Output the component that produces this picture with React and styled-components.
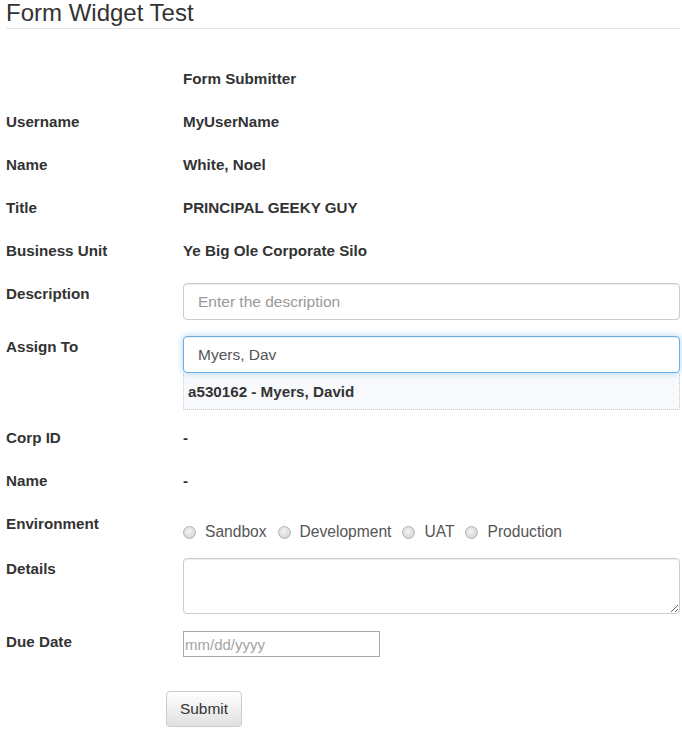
import React, { useState } from "react";
import styled, { createGlobalStyle } from "styled-components";

const GlobalStyle = createGlobalStyle`
  body {
    margin: 0;
    background: #fff;
    font-family: "Liberation Sans", Arial, sans-serif;
    color: #333;
  }
`;

const Page = styled.div`
  padding: 0 2px 0 6px;
`;

const Heading = styled.h3`
  margin: 0;
  font-size: 24px;
  font-weight: 400;
  line-height: 26px;
  padding-bottom: 2px;
  border-bottom: 1px solid #e5e5e5;
  color: #333;
`;

const Form = styled.form`
  display: flex;
  flex-direction: column;
  padding-top: 36px;
`;

const Row = styled.div`
  display: grid;
  grid-template-columns: 177px 1fr;
  margin-top: ${(p) => p.$top || 0}px;
`;

const Label = styled.label`
  font-size: 15.2px;
  font-weight: 700;
  line-height: 22px;
  padding-top: ${(p) => (p.$static ? 3 : 0)}px;
  color: #333;
`;

const Static = styled.div`
  font-size: 15.2px;
  font-weight: 700;
  line-height: 22px;
  padding: 3px 0;
  color: #333;
`;

const TextInput = styled.input`
  box-sizing: border-box;
  width: 100%;
  height: 37px;
  padding: 0 14px;
  font-family: inherit;
  font-size: 15.5px;
  color: #555;
  background: #fff;
  border: 1px solid ${(p) => (p.$focused ? "#66afe9" : "#ccc")};
  border-radius: 4px;
  outline: none;
  box-shadow: ${(p) =>
    p.$focused
      ? "inset 0 1px 1px rgba(0,0,0,.075), 0 0 7px rgba(102,175,233,.55)"
      : "inset 0 1px 1px rgba(0,0,0,.075)"};
  &::placeholder {
    color: #999;
  }
`;

const Suggest = styled.div`
  box-sizing: border-box;
  height: 37px;
  padding: 0 4px;
  display: flex;
  align-items: center;
  background: #f8f9fc;
  border: 1px dotted #c8c8c8;
  border-top: none;
  font-size: 15.2px;
  font-weight: 700;
  color: #333;
`;

const Radios = styled.div`
  display: flex;
  align-items: center;
  padding-top: 11px;
  height: 22px;
`;

const RadioLabel = styled.label`
  display: flex;
  align-items: center;
  font-size: 15.6px;
  color: #555;
  margin-right: 11px;
`;

const Radio = styled.input`
  appearance: none;
  width: 13px;
  height: 13px;
  margin: 0 9px 0 0;
  border-radius: 50%;
  border: 1px solid #b4b4b4;
  background: radial-gradient(circle at 45% 40%, #f4f4f4 0%, #dcdcdc 60%, #c9c9c9 100%);
  box-sizing: border-box;
`;

const TextArea = styled.textarea`
  box-sizing: border-box;
  width: 100%;
  height: 56px;
  padding: 6px 14px;
  font-family: inherit;
  font-size: 15.5px;
  color: #555;
  border: 1px solid #ccc;
  border-radius: 4px;
  box-shadow: inset 0 1px 1px rgba(0,0,0,.075);
  outline: none;
  display: block;
`;

const DateInput = styled.input`
  box-sizing: border-box;
  width: 197px;
  height: 26px;
  padding: 0 1px;
  font-family: inherit;
  font-size: 15px;
  color: #555;
  border: 1px solid #a9a9a9;
  border-radius: 0;
  outline: none;
  &::placeholder {
    color: #a3a3a3;
  }
`;

const SubmitButton = styled.button`
  margin: 34px 0 0 160px;
  width: 76px;
  height: 36px;
  font-family: inherit;
  font-size: 15.5px;
  color: #333;
  border: 1px solid #ccc;
  border-radius: 4px;
  background: linear-gradient(to bottom, #fff 0%, #e0e0e0 100%);
  box-shadow: inset 0 1px 0 rgba(255,255,255,.15), 0 1px 1px rgba(0,0,0,.075);
  cursor: pointer;
`;

const staticRows = [
  ["Username", "MyUserName"],
  ["Name", "White, Noel"],
  ["Title", "PRINCIPAL GEEKY GUY"],
  ["Business Unit", "Ye Big Ole Corporate Silo"],
];

const environments = ["Sandbox", "Development", "UAT", "Production"];

export default function App() {
  const [assignee, setAssignee] = useState("Myers, Dav");

  return (
    <Page>
      <GlobalStyle />
      <Heading>Form Widget Test</Heading>
      <Form onSubmit={(e) => e.preventDefault()}>
        <Row>
          <span />
          <Static>Form Submitter</Static>
        </Row>
        {staticRows.map(([label, value]) => (
          <Row key={label} $top={15}>
            <Label $static>{label}</Label>
            <Static>{value}</Static>
          </Row>
        ))}
        <Row $top={18}>
          <Label>Description</Label>
          <TextInput placeholder="Enter the description" />
        </Row>
        <Row $top={16}>
          <Label>Assign To</Label>
          <div>
            <TextInput
              $focused
              value={assignee}
              onChange={(e) => setAssignee(e.target.value)}
            />
            <Suggest>a530162 - Myers, David</Suggest>
          </div>
        </Row>
        <Row $top={14}>
          <Label $static>Corp ID</Label>
          <Static>-</Static>
        </Row>
        <Row $top={15}>
          <Label $static>Name</Label>
          <Static>-</Static>
        </Row>
        <Row $top={15}>
          <Label $static>Environment</Label>
          <Radios>
            {environments.map((env) => (
              <RadioLabel key={env}>
                <Radio type="radio" name="environment" value={env} />
                {env}
              </RadioLabel>
            ))}
          </Radios>
        </Row>
        <Row $top={15}>
          <Label>Details</Label>
          <TextArea />
        </Row>
        <Row $top={17}>
          <Label>Due Date</Label>
          <DateInput placeholder="mm/dd/yyyy" />
        </Row>
        <div>
          <SubmitButton type="submit">Submit</SubmitButton>
        </div>
      </Form>
    </Page>
  );
}
